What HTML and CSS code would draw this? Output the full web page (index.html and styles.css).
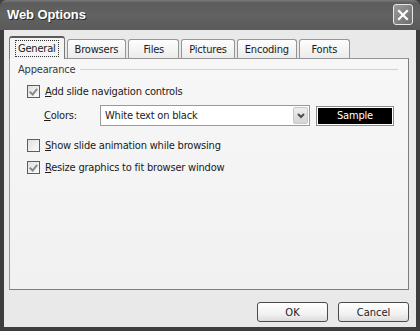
FILE: index.html
```html
<!DOCTYPE html>
<html lang="en">
<head>
    <meta charset="UTF-8">
    <meta name="viewport" content="width=device-width, initial-scale=1.0">
    <title>Web Options</title>
    <link rel="stylesheet" href="styles.css">
</head>
<body>

<div class="window">
  <div class="titlebar">
    <span class="title">Web Options</span>
    <button class="close" aria-label="Close">
      <svg width="12" height="12" viewBox="0 0 12 12">
        <path d="M2 2 L10 10 M10 2 L2 10" stroke="#fff" stroke-width="2.2" stroke-linecap="square" fill="none"/>
      </svg>
    </button>
  </div>

  <div class="client">
    <ul class="tabs">
      <li class="tab is-active"><span class="focus">General</span></li>
      <li class="tab">Browsers</li>
      <li class="tab">Files</li>
      <li class="tab">Pictures</li>
      <li class="tab">Encoding</li>
      <li class="tab">Fonts</li>
    </ul>

    <div class="page">
      <div class="group-head">
        <span>Appearance</span>
        <span class="rule"></span>
      </div>

      <label class="check">
        <span class="box is-checked"></span>
        <span><u>A</u>dd slide navigation controls</span>
      </label>

      <div class="colors-row">
        <span class="colors-label"><u>C</u>olors:</span>
        <div class="select">
          <span>White text on black</span>
          <span class="select__btn">
            <svg width="8" height="6" viewBox="0 0 8 6">
              <path d="M1 1 L4 4 L7 1" stroke="#4d4d4d" stroke-width="2" fill="none"/>
            </svg>
          </span>
        </div>
        <div class="sample"><span>Sample</span></div>
      </div>

      <label class="check check--gap">
        <span class="box"></span>
        <span><u>S</u>how slide animation while browsing</span>
      </label>

      <label class="check">
        <span class="box is-checked"></span>
        <span><u>R</u>esize graphics to fit browser window</span>
      </label>
    </div>

    <div class="buttons">
      <button class="btn">OK</button>
      <button class="btn">Cancel</button>
    </div>
  </div>
</div>

</body>
</html>
```

FILE: styles.css
```css
:root {
  --clr-frame: #3d3d3d;
  --clr-client: #e9e9e9;
  --clr-page: #f4f4f4;
  --clr-border: #959595;
  --clr-text: #1a1a1a;
}

* {
  box-sizing: border-box;
}

body {
  margin: 0;
  background: var(--clr-frame);
  font-family: "DejaVu Sans", sans-serif;
  font-stretch: condensed;
  font-size: 11px;
  letter-spacing: -0.2px;
  color: var(--clr-text);
}

.window {
  width: 420px;
  height: 331px;
  display: flex;
  flex-direction: column;
}

/* title bar */

.titlebar {
  height: 30px;
  display: flex;
  align-items: center;
  justify-content: space-between;
  padding: 0 7px 1px 7px;
  background: linear-gradient(#7a7a7a 0, #5c5c5c 3px, #626262 50%, #5a5a5a 100%);
  border-radius: 6px 6px 0 0;
}

.title {
  font-family: "Liberation Sans", sans-serif;
  font-weight: bold;
  font-size: 13px;
  letter-spacing: -0.1px;
  color: #fff;
  text-shadow: 1px 1px 0 #2c2c2c;
}

.close {
  width: 20px;
  height: 21px;
  padding: 0;
  display: grid;
  place-items: center;
  border: 1px solid #e8e8e8;
  border-radius: 3px;
  background: linear-gradient(135deg, #9a9a9a, #6e6e6e);
}

/* client area */

.client {
  flex: 1;
  display: flex;
  flex-direction: column;
  padding: 6px 7px 0 5px;
  background: var(--clr-client);
  border: 4px solid var(--clr-frame);
  border-top: 0;
}

.tabs {
  display: flex;
  align-items: flex-end;
  gap: 2px;
  margin: 0;
  padding: 0;
  list-style: none;
  position: relative;
  z-index: 1;
}

.tab {
  height: 19px;
  min-width: 51px;
  padding: 0 7px;
  display: grid;
  place-items: center;
  border: 1px solid var(--clr-border);
  border-bottom: 0;
  border-radius: 3px 3px 0 0;
  background: linear-gradient(#fdfdfd, #ececec);
}

.tab.is-active {
  height: 23px;
  margin-bottom: -1px;
  padding: 0 5px;
  background: var(--clr-page);
  border-color: #7a7a7a;
  border-top: 2px solid #5a5a5a;
}

.focus {
  padding: 1px 2px;
  border: 1px dotted #333;
}

.page {
  height: 232px;
  padding: 4px 10px 0 8px;
  background: linear-gradient(#f7f7f7, #f1f1f1);
  border: 1px solid var(--clr-border);
  border-right-color: #7e7e7e;
  border-bottom-color: #7e7e7e;
}

.group-head {
  display: flex;
  align-items: center;
  gap: 5px;
  color: #3a3a3a;
  height: 13px;
}

.rule {
  flex: 1;
  height: 1px;
  background: #d2d2d2;
}

.check {
  display: flex;
  align-items: center;
  gap: 5px;
  margin: 9px 0 0 9px;
  height: 13px;
}

.check--gap {
  margin-top: 13px;
}

.box {
  width: 13px;
  height: 13px;
  border: 1px solid #5e5e5e;
  background: linear-gradient(135deg, #e0e0e0, #fbfbfb);
  position: relative;
}

.box.is-checked::after {
  content: "";
  position: absolute;
  left: 3px;
  top: 1px;
  width: 3px;
  height: 6px;
  border: solid #8a8a8a;
  border-width: 0 2px 2px 0;
  transform: rotate(40deg);
}

.colors-row {
  display: flex;
  align-items: center;
  margin: 7px 0 0 26px;
  height: 21px;
}

.colors-label {
  width: 56px;
}

.select {
  width: 210px;
  height: 21px;
  display: flex;
  align-items: center;
  justify-content: space-between;
  padding: 0 1px 0 4px;
  background: #fff;
  border: 1px solid #9a9a9a;
}

.select__btn {
  width: 15px;
  height: 17px;
  display: grid;
  place-items: center;
  border: 1px solid #c8c8c8;
  border-radius: 2px;
  background: linear-gradient(#eeeeee, #d4d4d4);
}

.sample {
  width: 78px;
  height: 20px;
  margin-left: 6px;
  padding: 1px;
  border: 1px solid #8c8c8c;
  background: #fff;
}

.sample span {
  display: grid;
  place-items: center;
  height: 100%;
  background: #000;
  color: #fff;
}

/* dialog buttons */

.buttons {
  display: flex;
  justify-content: flex-end;
  gap: 10px;
  margin-top: 12px;
}

.btn {
  width: 71px;
  height: 20px;
  padding: 0;
  font: inherit;
  color: var(--clr-text);
  border: 1px solid #4a4a4a;
  border-radius: 3px;
  background: linear-gradient(#ffffff, #f2f2f2 60%, #dcdcdc);
}
```
